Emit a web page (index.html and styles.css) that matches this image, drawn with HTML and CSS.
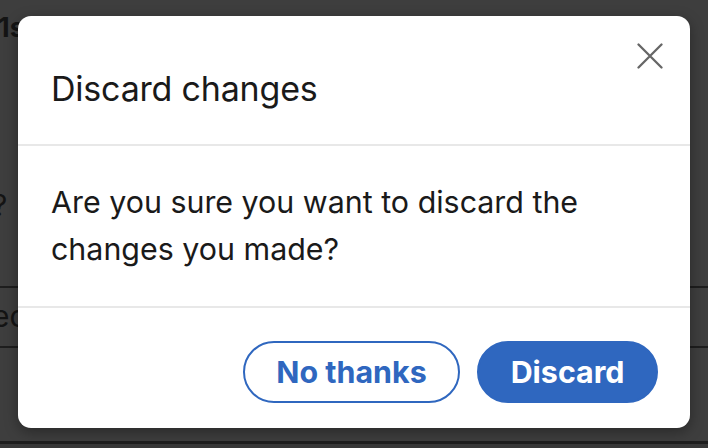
FILE: index.html
```html
<!DOCTYPE html>
<html lang="en">
<head>
<meta charset="utf-8">
<title>Discard changes</title>
<link rel="stylesheet" href="styles.css">
</head>
<body>
<div class="page">
  <div class="row row-top"><span class="bg-heading">1s</span></div>
  <div class="row row-e"><span class="bg-text">ec</span></div>
  <div class="row row-empty"></div>
  <div class="row row-last"></div>
</div>

<div class="dialog" role="dialog" aria-labelledby="dlg-title">
  <div class="dialog-header">
    <h2 class="dialog-title" id="dlg-title">Discard changes</h2>
  </div>
  <button class="close-btn" aria-label="Dismiss">
    <svg viewBox="0 0 26 26" width="26" height="26" aria-hidden="true">
      <path d="M1.5 1.5 L24.5 24.5 M24.5 1.5 L1.5 24.5" stroke="#666666" stroke-width="2.3" stroke-linecap="round" fill="none"/>
    </svg>
  </button>
  <div class="dialog-body">
    <p class="dialog-text">Are you sure you want to discard the changes you made?</p>
  </div>
  <div class="dialog-footer">
    <button class="btn btn-secondary">No thanks</button>
    <button class="btn btn-primary">Discard</button>
  </div>
</div>
</body>
</html>
```

FILE: styles.css
```css
html, body {
  margin: 0;
  padding: 0;
}
body {
  width: 708px;
  height: 448px;
  overflow: hidden;
  background: #3e3e3e;
  font-family: Inter, "Noto Sans", "Liberation Sans", sans-serif;
  position: relative;
}

/* dimmed page behind the modal */
.page {
  display: flex;
  flex-direction: column;
}
.row {
  display: flex;
  align-items: center;
}
.row-top {
  height: 286px;
  align-items: flex-start;
  flex-direction: column;
}
.bg-heading {
  font-size: 27px;
  font-weight: 700;
  color: #141414;
  margin-top: 12px;
  margin-left: -2px;
  line-height: 32px;
}
.row-top::after {
  content: "?";
  font-size: 30px;
  color: #141414;
  margin-top: 146px;
  margin-left: -8px;
  line-height: 30px;
}
.row-e {
  border-top: 2px solid #1e1e1e;
  border-bottom: 2px solid #1e1e1e;
  height: 58px;
}
.bg-text {
  font-size: 30px;
  color: #141414;
  margin-left: -8px;
  line-height: 30px;
  margin-top: -2px;
}
.row-empty {
  height: 93px;
}
.row-last {
  border-top: 3px solid #1e1e1e;
  height: 10px;
  background: #383838;
}

/* modal */
.dialog {
  position: absolute;
  left: 18px;
  top: 16px;
  width: 672px;
  height: 412px;
  background: #ffffff;
  border-radius: 13px;
  box-shadow: 0 4px 14px rgba(0, 0, 0, 0.35);
  display: flex;
  flex-direction: column;
  box-sizing: border-box;
}
.dialog-header {
  height: 77px;
  border-bottom: 2px solid #e8e8e8;
  display: flex;
  align-items: flex-start;
  padding: 51px 33px 0;
  box-sizing: content-box;
}
.dialog-title {
  margin: 0;
  font-size: 34px;
  font-weight: 400;
  color: #1a1a1a;
  line-height: 44px;
  letter-spacing: -0.2px;
}
.close-btn {
  position: absolute;
  top: 27px;
  right: 27px;
  width: 26px;
  height: 26px;
  padding: 0;
  border: 0;
  background: transparent;
  display: flex;
}
.dialog-body {
  padding: 33px 33px;
  border-bottom: 2px solid #e8e8e8;
}
.dialog-text {
  margin: 0;
  font-size: 30.4px;
  line-height: 47px;
  color: #1a1a1a;
}
.dialog-footer {
  display: flex;
  justify-content: flex-end;
  gap: 17px;
  padding: 33px 32px 0;
}
.btn {
  height: 62px;
  border-radius: 31px;
  border: 2px solid #2f67bf;
  padding: 0 31.5px;
  font-family: Inter, "Noto Sans", "Liberation Sans", sans-serif;
  font-size: 30.4px;
  font-weight: 700;
  box-sizing: border-box;
  line-height: 1;
}
.btn-secondary {
  background: #ffffff;
  color: #2f67bf;
}
.btn-primary {
  background: #2f67bf;
  color: #ffffff;
}
```
